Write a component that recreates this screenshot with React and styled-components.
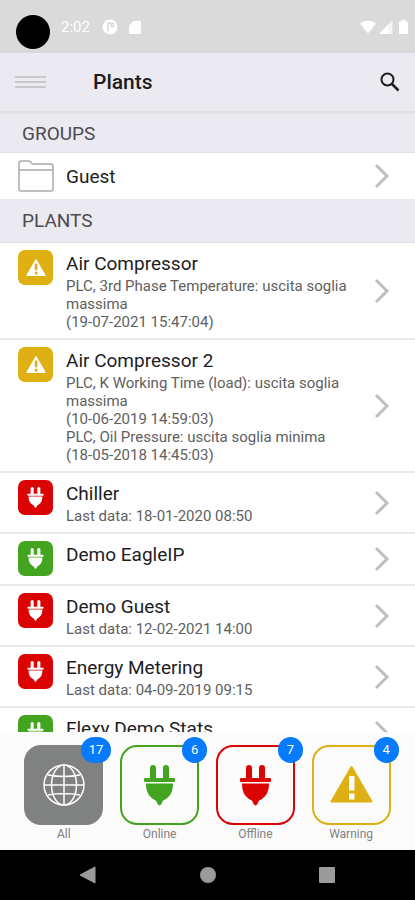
import React from 'react';
import styled, { createGlobalStyle } from 'styled-components';

const COLORS = {
  warning: '#dfb013',
  online: '#43a41f',
  offline: '#dc0303',
  all: '#808281',
};

const plants = [
  {
    id: 1,
    name: 'Air Compressor',
    status: 'warning',
    lines: ['PLC, 3rd Phase Temperature: uscita soglia massima', '(19-07-2021 15:47:04)'],
  },
  {
    id: 2,
    name: 'Air Compressor 2',
    status: 'warning',
    lines: [
      'PLC, K Working Time (load): uscita soglia massima',
      '(10-06-2019 14:59:03)',
      'PLC, Oil Pressure: uscita soglia minima',
      '(18-05-2018 14:45:03)',
    ],
  },
  { id: 3, name: 'Chiller', status: 'offline', lines: ['Last data: 18-01-2020 08:50'] },
  { id: 4, name: 'Demo EagleIP', status: 'online', lines: [] },
  { id: 5, name: 'Demo Guest', status: 'offline', lines: ['Last data: 12-02-2021 14:00'] },
  { id: 6, name: 'Energy Metering', status: 'offline', lines: ['Last data: 04-09-2019 09:15'] },
  { id: 7, name: 'Flexy Demo Stats', status: 'online', lines: [] },
];

const filters = [
  { id: 'all', label: 'All', count: 17 },
  { id: 'online', label: 'Online', count: 6 },
  { id: 'offline', label: 'Offline', count: 7 },
  { id: 'warning', label: 'Warning', count: 4 },
];

export default function App() {
  return (
    <>
      <GlobalStyle />
      <Screen>
        <StatusBar>
          <Camera />
          <Clock>2:02</Clock>
          <AppGlyph />
          <SdCardGlyph />
          <Signals>
            <WifiGlyph />
            <CellGlyph />
            <BatteryGlyph />
          </Signals>
        </StatusBar>
        <Header>
          <MenuButton aria-label="Menu"><i /><i /><i /></MenuButton>
          <PageTitle>Plants</PageTitle>
          <SearchButton aria-label="Search"><SearchIcon /></SearchButton>
        </Header>
        <Content>
          <SectionTitle>GROUPS</SectionTitle>
          <GroupRow href="#guest">
            <FolderIcon />
            <Name>Guest</Name>
            <Chevron />
          </GroupRow>
          <SectionTitle $tall>PLANTS</SectionTitle>
          {plants.map((plant) => (
            <PlantRow key={plant.id} href={`#plant-${plant.id}`}>
              <StatusIcon $color={COLORS[plant.status]}>
                {plant.status === 'warning' ? <WarningIcon size={20} mark={COLORS.warning} /> : <PlugIcon size={21} />}
              </StatusIcon>
              <Info>
                <Name>{plant.name}</Name>
                {plant.lines.map((line) => <Detail key={line}>{line}</Detail>)}
              </Info>
              <Chevron />
            </PlantRow>
          ))}
        </Content>
        <Filters>
          {filters.map((item) => (
            <Filter key={item.id}>
              <Tile $color={COLORS[item.id]} $filled={item.id === 'all'}>
                <FilterIcon id={item.id} />
                <Badge>{item.count}</Badge>
              </Tile>
              <FilterLabel>{item.label}</FilterLabel>
            </Filter>
          ))}
        </Filters>
        <NavBar>
          <NavButton aria-label="Back">
            <svg width="18" height="18" viewBox="0 0 18 18"><path d="M1 9 16 1v16z" fill="#9b9b9b" stroke="#9b9b9b" strokeLinejoin="round" /></svg>
          </NavButton>
          <NavButton aria-label="Home">
            <svg width="18" height="18" viewBox="0 0 18 18"><circle cx="9" cy="9" r="8" fill="#9b9b9b" /></svg>
          </NavButton>
          <NavButton aria-label="Recents">
            <svg width="18" height="18" viewBox="0 0 18 18"><rect x="1" y="1" width="16" height="16" rx="1" fill="#9b9b9b" /></svg>
          </NavButton>
        </NavBar>
      </Screen>
    </>
  );
}

function FilterIcon({ id }) {
  if (id === 'all') return <GlobeIcon />;
  if (id === 'warning') return <WarningIcon size={43} mark="#fbfbfb" />;
  return <PlugIcon size={41} />;
}

function PlugIcon({ size }) {
  return (
    <svg width={size} height={size} viewBox="0 0 41 41" fill="currentColor">
      <rect x="11" y="0" width="6" height="16" rx="3" />
      <rect x="24" y="0" width="6" height="16" rx="3" />
      <rect x="5" y="13" width="31" height="4" rx="1" />
      <path d="M7 18.500h27c0 7-2 12-7 15.500-2 1.400-3 1.300-3.500 2.500-.5 1.500-1.500 4-3 4s-2.500-2.500-3-4c-.5-1.200-1.500-1.100-3.500-2.500C9 30.500 7 25.500 7 18.500z" />
    </svg>
  );
}

function WarningIcon({ size, mark }) {
  return (
    <svg width={size} height={size} viewBox="0 0 43 43">
      <path d="M21.500 3 41.500 37.500h-40z" fill="currentColor" stroke="currentColor" strokeWidth="2" strokeLinejoin="round" />
      <path d="M19 12h5.500v14.500H19zM19 29.500h5.500v6H19z" fill={mark} />
    </svg>
  );
}

function GlobeIcon() {
  return (
    <svg width="42" height="42" viewBox="0 0 42 42" fill="none" stroke="#fff" strokeWidth="1.500">
      <circle cx="21" cy="21" r="20" />
      <ellipse cx="21" cy="21" rx="12.500" ry="20" />
      <path d="M21 1v40M1 21h40M5 11q16 3 32 0M5 31q16-3 32 0" />
    </svg>
  );
}

function FolderIcon() {
  return (
    <svg width="36" height="32" viewBox="0 0 36 32" fill="none" stroke="#a9a9a9" strokeWidth="1.500">
      <path d="M1 29V3.500Q1 1 3.500 1h7q1.500 0 2.500 1.500L14.500 4H32.500Q35 4 35 6.500V29q0 2-2 2H3q-2 0-2-2zM1 10h34" />
    </svg>
  );
}

function Chevron() {
  return (
    <ChevronSvg width="16" height="26" viewBox="0 0 16 26" fill="none" stroke="#bfbfbf" strokeWidth="3">
      <path d="M2 2l11 11L2 24" />
    </ChevronSvg>
  );
}

function SearchIcon() {
  return (
    <svg width="20" height="20" viewBox="0 0 20 20" fill="none" stroke="#1d1d1f">
      <circle cx="7.500" cy="7.500" r="6" strokeWidth="2" />
      <path d="M12 12l6.500 6.500" strokeWidth="2.500" />
    </svg>
  );
}

function AppGlyph() {
  return (
    <svg width="16" height="16" viewBox="0 0 16 16">
      <circle cx="8" cy="8" r="7.500" fill="#fff" />
      <path d="M6 12.500V4h2.500M9 4.500h2.500v3H9z" fill="none" stroke="#dadada" strokeWidth="1.500" />
    </svg>
  );
}

function SdCardGlyph() {
  return (
    <svg width="12" height="15" viewBox="0 0 12 15">
      <path d="M4.500 1H11q1 0 1 1v11q0 1-1 1H1q-1 0-1-1V5.500z" fill="#fff" />
    </svg>
  );
}

function WifiGlyph() {
  return (
    <svg width="16" height="14" viewBox="0 0 16 14">
      <path d="M0 3.500Q8-2.500 16 3.500L8 13.500z" fill="#fff" />
    </svg>
  );
}

function CellGlyph() {
  return (
    <svg width="17" height="14" viewBox="0 0 17 14">
      <path d="M13.500 0v14H0z" fill="#fff" opacity=".7" />
      <path d="M9.500 4.500V14H0z" fill="#fff" />
    </svg>
  );
}

function BatteryGlyph() {
  return (
    <svg width="9" height="14" viewBox="0 0 9 14">
      <path d="M2.500 0h4v1.500H8q1 0 1 1V13q0 1-1 1H1q-1 0-1-1V2.500q0-1 1-1h1.500z" fill="#fff" />
    </svg>
  );
}

const GlobalStyle = createGlobalStyle`
  * {
    box-sizing: border-box;
  }
  body {
    margin: 0;
    font-family: Roboto, "Noto Sans", sans-serif;
  }
  button {
    padding: 0;
    border: 0;
    background: none;
    font: inherit;
    cursor: pointer;
  }
  a {
    color: inherit;
    text-decoration: none;
  }
  svg {
    display: block;
    flex-shrink: 0;
  }
`;

const Screen = styled.div`
  display: flex;
  flex-direction: column;
  height: 100vh;
  background: #fff;
`;

const StatusBar = styled.div`
  display: flex;
  align-items: center;
  gap: 11px;
  flex-shrink: 0;
  height: 53px;
  padding: 1px 7px 0 16px;
  background: #dadada;
`;

const Camera = styled.div`
  align-self: flex-end;
  width: 34px;
  height: 34px;
  margin-bottom: 4px;
  border-radius: 50%;
  background: #000;
`;

const Clock = styled.span`
  width: 30px;
  font-size: 15px;
  color: #fff;
`;

const Signals = styled.div`
  display: flex;
  gap: 3px;
  margin-left: auto;
`;

const Header = styled.header`
  display: flex;
  align-items: center;
  flex-shrink: 0;
  height: 61px;
  padding: 0 15px;
  border-bottom: 3px solid #e0e0e5;
  background: #ebeaf1;
`;

const MenuButton = styled.button`
  display: flex;
  flex-direction: column;
  gap: 3px;
  width: 31px;

  i {
    height: 2px;
    background: #c9c8cd;
  }
`;

const PageTitle = styled.h1`
  flex: 1;
  margin: 0 0 0 47px;
  font-size: 21px;
  line-height: 26px;
  font-weight: 500;
  color: #1d1d1f;
`;

const SearchButton = styled.button``;

const Content = styled.main`
  flex: 1;
  min-height: 0;
  overflow: hidden;
`;

const SectionTitle = styled.h2`
  display: flex;
  align-items: center;
  height: ${({ $tall }) => ($tall ? 44 : 39)}px;
  margin: 0;
  padding: 0 22px;
  border-bottom: 1px solid #e0e0e3;
  background: #ebeaf1;
  font-size: 19px;
  font-weight: 400;
  color: #4b4b50;
`;

const GroupRow = styled.a`
  display: flex;
  align-items: center;
  height: 46px;
  padding: 0 25px 0 18px;
  gap: 12px;
`;

const PlantRow = styled.a`
  display: flex;
  align-items: flex-start;
  gap: 13px;
  padding: 7px 25px 7px 18px;
  border-bottom: 2px solid #e8e8ea;
`;

const StatusIcon = styled.div`
  display: flex;
  align-items: center;
  justify-content: center;
  flex-shrink: 0;
  width: 35px;
  height: 35px;
  border-radius: 7px;
  background: ${({ $color }) => $color};
  color: #fff;
`;

const Info = styled.div`
  flex: 1;
  padding-right: 8px;
  min-height: 36px;
`;

const Name = styled.div`
  font-size: 19px;
  line-height: 27px;
  color: #1d1d1f;
`;

const Detail = styled.div`
  font-size: 15px;
  line-height: 18px;
  color: #606060;
`;

const ChevronSvg = styled.svg`
  align-self: center;
  margin-left: auto;
`;

const Filters = styled.nav`
  display: grid;
  grid-template-columns: repeat(4, 1fr);
  flex-shrink: 0;
  height: 118px;
  padding: 13px 16px 0;
  background: #fbfbfb;
`;

const Filter = styled.button`
  display: flex;
  flex-direction: column;
  align-items: center;
`;

const Tile = styled.span`
  position: relative;
  display: flex;
  align-items: center;
  justify-content: center;
  width: 79px;
  height: 80px;
  border: 2px solid ${({ $color }) => $color};
  border-radius: 17px;
  background: ${({ $color, $filled }) => ($filled ? $color : 'transparent')};
  color: ${({ $color }) => $color};
`;

const Badge = styled.span`
  position: absolute;
  top: -10px;
  right: -10px;
  min-width: 25px;
  height: 26px;
  padding: 0 8px;
  border-radius: 13px;
  background: #067bfe;
  font-size: 13px;
  line-height: 26px;
  text-align: center;
  color: #fff;
`;

const FilterLabel = styled.span`
  margin-top: 1px;
  font-size: 12px;
  line-height: 16px;
  color: #808080;
`;

const NavBar = styled.div`
  display: flex;
  align-items: center;
  justify-content: space-between;
  flex-shrink: 0;
  height: 50px;
  padding: 0 79px;
  background: #000;
`;

const NavButton = styled.button``;
